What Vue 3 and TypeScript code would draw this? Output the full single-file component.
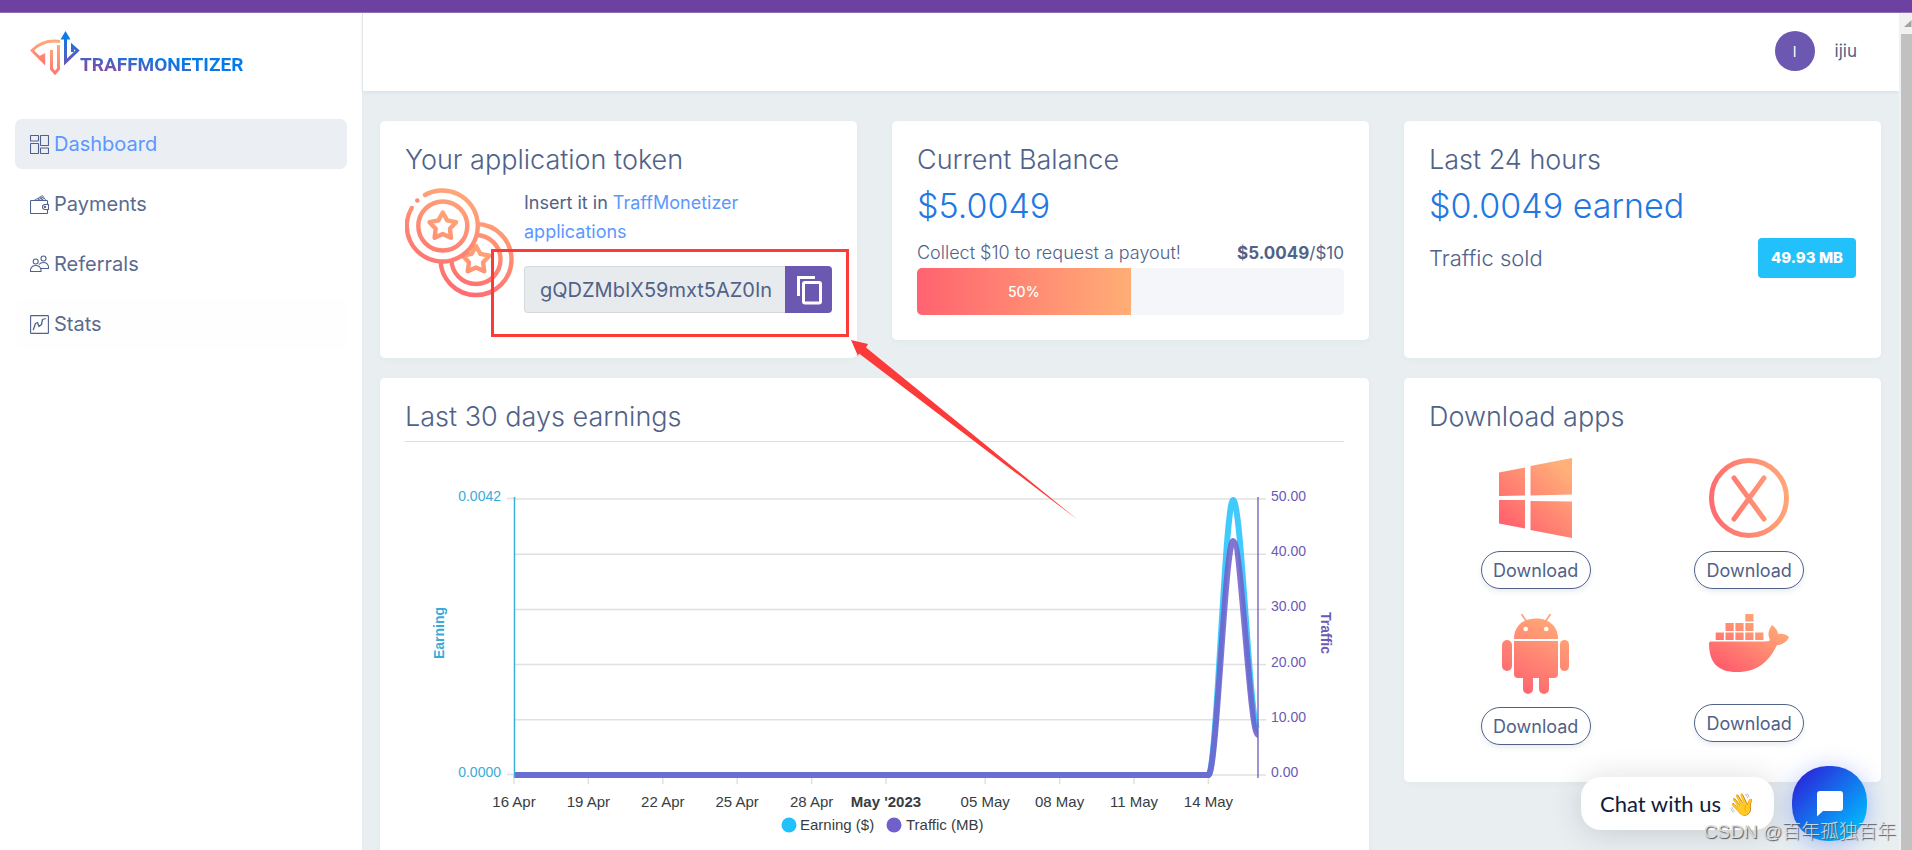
<script setup lang="ts">
import { ref } from 'vue'

interface NavItem {
  id: string
  label: string
}

const nav: NavItem[] = [
  { id: 'dashboard', label: 'Dashboard' },
  { id: 'payments', label: 'Payments' },
  { id: 'referrals', label: 'Referrals' },
  { id: 'stats', label: 'Stats' },
]
const active = ref('dashboard')
const token = ref('gQDZMbIX59mxt5AZ0In')
const progress = 50

const apps: string[] = ['windows', 'macos', 'android', 'docker']

const plot = { left: 109, right: 853, top: 57, bottom: 333 }
const day = (plot.right - plot.left) / 30
const rows = [0, 1, 2, 3, 4, 5].map((i) => ({
  y: plot.top + ((plot.bottom - plot.top) / 5) * i,
  label: ((5 - i) * 10).toFixed(2),
}))
const dates = [
  { d: 0, label: '16 Apr' },
  { d: 3, label: '19 Apr' },
  { d: 6, label: '22 Apr' },
  { d: 9, label: '25 Apr' },
  { d: 12, label: '28 Apr' },
  { d: 15, label: "May '2023", strong: true },
  { d: 19, label: '05 May' },
  { d: 22, label: '08 May' },
  { d: 25, label: '11 May' },
  { d: 28, label: '14 May' },
].map((t) => ({ ...t, x: plot.left + t.d * day }))

function curve(peak: number, end: number): string {
  const x0 = plot.left + 28 * day
  const x1 = x0 + day
  const x2 = plot.right
  const b = plot.bottom
  const k = day / 3
  return `M${plot.left} ${b}H${x0}C${x0 + k} ${b} ${x1 - k} ${peak} ${x1} ${peak}C${x1 + k} ${peak} ${x2 - k} ${end} ${x2} ${end}`
}
const earningPath = curve(58, 288)
const trafficPath = curve(99, 293)

function copyToken() {
  navigator.clipboard?.writeText(token.value)
}
</script>

<template>
  <div class="window">
    <div class="strip"></div>
    <div class="body">
      <aside class="sidebar">
        <a class="logo" href="#">
          <svg width="50" height="46" viewBox="0 0 50 46" fill="none" stroke-width="3">
            <defs>
              <linearGradient id="lg-warm" x1="0" y1="1" x2="0" y2="0">
                <stop offset="0" stop-color="#ff7a72" />
                <stop offset="1" stop-color="#ffa877" />
              </linearGradient>
              <linearGradient id="lg-cool" gradientUnits="userSpaceOnUse" x1="36" y1="34" x2="36" y2="4">
                <stop offset="0" stop-color="#6a55b4" />
                <stop offset="1" stop-color="#0a7bea" />
              </linearGradient>
            </defs>
            <path d="M30 10.500C19 9 9 12.500 2.200 19.500L13.700 31V24.500L9.500 26.500" stroke="url(#lg-warm)" />
            <path d="M21.500 19V38L25 42L28.500 38V14" stroke="url(#lg-warm)" />
            <path d="M35.500 6V31L47.500 19.500L42.500 15V21" stroke="url(#lg-cool)" />
            <path d="M35.500 0L40.500 8.500H30.500Z" fill="#0a7bea" />
          </svg>
          <span>TRAFFMONETIZER</span>
        </a>
        <nav>
          <a
            v-for="n in nav"
            :key="n.id"
            href="#"
            class="item"
            :class="[n.id, { active: n.id === active }]"
            @click.prevent="active = n.id"
          >
            <svg width="19" height="19" viewBox="0 0 19 19" fill="none" stroke="#4f6190" stroke-width="1.100">
              <template v-if="n.id === 'dashboard'">
                <rect x="0.500" y="0.500" width="8" height="5.500" rx="0.500" />
                <rect x="10.500" y="0.500" width="8" height="10" rx="0.500" />
                <rect x="0.500" y="8.500" width="8" height="10" rx="0.500" />
                <rect x="10.500" y="13" width="8" height="5.500" rx="0.500" />
              </template>
              <template v-else-if="n.id === 'payments'">
                <path d="M17.500 9.500V6.200Q17.500 5.500 16.800 5.500H1.200Q0.500 5.500 0.500 6.200V17.800Q0.500 18.500 1.200 18.500H16.800Q17.500 18.500 17.500 17.800V14.500" />
                <path d="M18.500 9.500H15A2.500 2.500 0 0 0 15 14.500H18.500Z" />
                <circle cx="15" cy="12" r="0.600" />
                <path d="M4 5.500L12.500 0.600L16 5.500M7 5.500L13 2M10 5.500L14 3.500M8 3.200L9.500 5.500M10.500 1.800L13 5.500" stroke-width="0.900" />
              </template>
              <template v-else-if="n.id === 'referrals'">
                <circle cx="5.700" cy="6.500" r="2.500" />
                <circle cx="13.500" cy="3.500" r="2.500" />
                <path d="M0.500 16.500V14.500Q1.500 10.500 5.700 10.500Q10 10.500 11 14.500V16.500Z" />
                <path d="M9 9.500Q10.500 7.500 13.500 7.500Q17.500 7.500 18.500 11.500V13.500H11" />
              </template>
              <template v-else>
                <rect x="0.600" y="0.600" width="17.800" height="17.800" rx="0.500" />
                <path d="M3.200 15L5.500 8.500L7.500 7.500L9 11.500L11.500 9.500L12.500 4.500L15.800 3.500" stroke-width="1.300" stroke-linejoin="round" />
              </template>
            </svg>
            <span>{{ n.label }}</span>
          </a>
        </nav>
      </aside>

      <main class="main">
        <header class="header">
          <button class="avatar" type="button" aria-label="Account">I</button>
          <span class="user">ijiu</span>
        </header>

        <div class="content">
          <section class="card token">
            <h2>Your application token</h2>
            <div class="token-row">
              <svg class="medals" width="109" height="110" viewBox="0 0 109 110" fill="none" stroke="url(#coin)" stroke-width="4.400" stroke-linecap="round" stroke-linejoin="round">
                <defs>
                  <linearGradient id="coin" gradientUnits="userSpaceOnUse" x1="35" y1="100" x2="75" y2="10">
                    <stop offset="0" stop-color="#ff6a70" />
                    <stop offset="1" stop-color="#ffa877" />
                  </linearGradient>
                </defs>
                <circle cx="71" cy="71.500" r="35.500" />
                <circle cx="71" cy="71.500" r="24.500" />
                <path transform="translate(71 72)" d="M0-14L4.400-6.100L13.300-4.300L7.100 2.300L8.200 11.300L0 7.500L-8.200 11.300L-7.100 2.300L-13.300-4.300L-4.400-6.100Z" />
                <circle cx="37.800" cy="38" r="36" fill="#fff" stroke="none" />
                <path d="M20 7A35.500 35.500 0 1 1 6.700 20" />
                <circle cx="12.300" cy="12.500" r="2.300" fill="#ff8b74" stroke="none" />
                <circle cx="37.800" cy="38" r="24.500" />
                <path transform="translate(37.800 38.500)" d="M0-14L4.400-6.100L13.300-4.300L7.100 2.300L8.200 11.300L0 7.500L-8.200 11.300L-7.100 2.300L-13.300-4.300L-4.400-6.100Z" />
              </svg>
              <div class="token-col">
                <p>Insert it in <a href="#">TraffMonetizer applications</a></p>
                <div class="group">
                  <input v-model="token" type="text" readonly aria-label="Application token" />
                  <button type="button" aria-label="Copy token" @click="copyToken">
                    <svg width="26" height="30" viewBox="0 0 26 30" fill="none" stroke="#fff" stroke-width="3">
                      <path d="M2.500 21V2.500H19" />
                      <rect x="7.500" y="7.500" width="17" height="20.500" rx="1.500" />
                    </svg>
                  </button>
                  <div class="mark"></div>
                  <svg class="arrow" width="228" height="182" viewBox="0 0 228 182">
                    <path d="M0 0L17 4L15 7.500L227 180L8 13.500L7 16Z" fill="#fc3a3a" />
                  </svg>
                </div>
              </div>
            </div>
          </section>

          <section class="card balance">
            <h2>Current Balance</h2>
            <div class="amount">$5.0049</div>
            <div class="collect">
              <span class="hint">Collect $10 to request a payout!</span>
              <span><b>$5.0049</b>/$10</span>
            </div>
            <div class="bar" role="progressbar" :aria-valuenow="progress">
              <div class="fill" :style="{ width: progress + '%' }">{{ progress }}%</div>
            </div>
          </section>

          <section class="card">
            <h2>Last 24 hours</h2>
            <div class="amount">$0.0049 earned</div>
            <div class="sold">
              <span>Traffic sold</span>
              <span class="badge">49.93 MB</span>
            </div>
          </section>

          <section class="card chart">
            <h2>Last 30 days earnings</h2>
            <svg viewBox="0 0 939 430" class="plot">
              <g stroke="#e0e0e0" stroke-width="1.500">
                <line v-for="r in rows" :key="r.label" :x1="plot.left" :x2="plot.right" :y1="r.y" :y2="r.y" />
                <line v-for="r in rows" :key="'t' + r.label" :x1="plot.right" :x2="plot.right + 8" :y1="r.y" :y2="r.y" />
                <line v-for="t in dates" :key="t.label" :x1="t.x" :x2="t.x" :y1="plot.bottom" :y2="plot.bottom + 9" />
                <path d="M102 56.500H109M102 332.500H109" />
              </g>
              <g fill="none" stroke-width="6">
                <path :d="earningPath" stroke="#22c1fb" stroke-opacity="0.850" />
                <path :d="trafficPath" stroke="#6f60cb" stroke-opacity="0.870" />
              </g>
              <path d="M109.500 55V336" stroke="#3daedb" stroke-width="1.500" />
              <path d="M853 55V336" stroke="#6b5bb5" stroke-width="1.300" />
              <g class="ylab earn" text-anchor="end">
                <text x="96" y="59">0.0042</text>
                <text x="96" y="335">0.0000</text>
              </g>
              <g class="ylab traf">
                <text v-for="r in rows" :key="r.label" x="866" :y="r.y + 2">{{ r.label }}</text>
              </g>
              <text class="axis earn" text-anchor="middle" transform="translate(39 191) rotate(-90)">Earning</text>
              <text class="axis traf" text-anchor="middle" transform="translate(916 191) rotate(90)">Traffic</text>
              <g class="xlab" text-anchor="middle">
                <text v-for="t in dates" :key="t.label" :x="t.x" y="365" :class="{ strong: t.strong }">{{ t.label }}</text>
              </g>
              <g class="xlab">
                <circle cx="384" cy="383" r="7.500" fill="#22c1fb" />
                <text x="395" y="388">Earning ($)</text>
                <circle cx="489" cy="383" r="7.500" fill="#6f60cb" />
                <text x="501" y="388">Traffic (MB)</text>
              </g>
            </svg>
          </section>

          <section class="card downloads">
            <h2>Download apps</h2>
            <div class="apps">
              <div v-for="a in apps" :key="a" class="app">
                <svg v-if="a === 'windows'" width="73" height="80" viewBox="0 0 73 80" fill="url(#app-warm)">
                  <defs>
                    <linearGradient id="app-warm" gradientUnits="userSpaceOnUse" x1="8" y1="66" x2="62" y2="8">
                      <stop offset="0" stop-color="#ff646e" />
                      <stop offset="1" stop-color="#ffaf79" />
                    </linearGradient>
                  </defs>
                  <path d="M0 14.500L26 9.500V37.500L0 38ZM31.500 8L73 0V36.500L31.500 37.500ZM0 42H26V70.500L0 65.500ZM31.500 43L73 43.500V80L31.500 72Z" />
                </svg>
                <svg v-else-if="a === 'macos'" width="80" height="80" viewBox="0 0 80 80" fill="none" stroke="url(#mac-warm)" stroke-width="5" stroke-linecap="round">
                  <defs>
                    <linearGradient id="mac-warm" gradientUnits="userSpaceOnUse" x1="0" y1="44" x2="80" y2="36">
                      <stop offset="0" stop-color="#ff6a70" />
                      <stop offset="1" stop-color="#ffa877" />
                    </linearGradient>
                  </defs>
                  <circle cx="40" cy="40" r="37.500" />
                  <path d="M25 20L55 61M55 20L25 61" />
                </svg>
                <svg v-else-if="a === 'android'" width="67" height="80" viewBox="0 0 67 80" fill="url(#droid-warm)">
                  <defs>
                    <linearGradient id="droid-warm" gradientUnits="userSpaceOnUse" x1="16" y1="72" x2="52" y2="8">
                      <stop offset="0" stop-color="#ff6870" />
                      <stop offset="1" stop-color="#ffa877" />
                    </linearGradient>
                  </defs>
                  <path d="M12 25C12 12 21 4.500 34 4.500S56 12 56 25Z" />
                  <path d="M19.500 0L24.500 7.500M48.500 0L43.500 7.500" stroke="#ffa076" stroke-width="1.600" />
                  <circle cx="23.700" cy="15" r="2.300" fill="#fff" />
                  <circle cx="44.200" cy="15" r="2.300" fill="#fff" />
                  <path d="M12 27H56V60Q56 64 52 64H16Q12 64 12 60Z" />
                  <rect x="0" y="26" width="10" height="31" rx="5" />
                  <rect x="58" y="26" width="9" height="31" rx="4.500" />
                  <rect x="21" y="58" width="10" height="22" rx="5" />
                  <rect x="37" y="58" width="10" height="22" rx="5" />
                </svg>
                <svg v-else width="80" height="77" viewBox="0 0 80 77" fill="url(#whale-warm)">
                  <defs>
                    <linearGradient id="whale-warm" gradientUnits="userSpaceOnUse" x1="18" y1="56" x2="50" y2="4">
                      <stop offset="0" stop-color="#ff5f6d" />
                      <stop offset="1" stop-color="#ffa676" />
                    </linearGradient>
                  </defs>
                  <path d="M36.300 0H44.500V7.500H36.300ZM16.500 9H24.700V17H16.500ZM26.400 9H34.600V17H26.400ZM36.300 9H44.500V17H36.300ZM6.700 18.500H14.900V26H6.700ZM16.500 18.500H24.700V26H16.500ZM26.400 18.500H34.600V26H26.400ZM36.300 18.500H44.500V26H36.300ZM46.200 18.500H54.400V26H46.200Z" />
                  <path d="M0 29Q0 27.500 2 27.500H56C59 27.500 61 26.500 61 26C58 20 60 15 63 11C67 14 69 17 69 20C73 19.500 77 20 80 23C78 28 73 31 68 31C60 48 48 58 28 58C8 58 0 48 0 29Z" />
                </svg>
                <button type="button">Download</button>
              </div>
            </div>
          </section>
        </div>
      </main>

      <div class="scroll">
        <svg width="11" height="21" viewBox="0 0 11 21"><path d="M3 14L10.500 7V14Z" fill="#a3a3a3" /></svg>
        <div class="thumb"></div>
      </div>
    </div>

    <div class="chat">
      <div class="bubble">Chat with us <span class="wave">👋</span></div>
      <button type="button" aria-label="Open chat">
        <svg width="26" height="26" viewBox="0 0 26 26" fill="#fff"><path d="M3 0H23Q26 0 26 3V17Q26 20 23 20H6L0 25.500V3Q0 0 3 0Z" /></svg>
      </button>
    </div>
    <div class="credit">CSDN @百年孤独百年</div>
  </div>
</template>

<style>
body {
  margin: 0;
}
</style>

<style scoped>
* {
  box-sizing: border-box;
}
.window {
  position: relative;
  height: 100vh;
  display: flex;
  flex-direction: column;
  overflow: hidden;
  font-family: Inter, "Open Sans", sans-serif;
  color: #506288;
  background: #e9eff1;
}
.strip {
  flex: none;
  height: 13px;
  background: #6d41a1;
  border-bottom: 1px solid #9170b7;
}
.body {
  flex: 1;
  min-height: 0;
  display: flex;
}
.sidebar {
  flex: none;
  width: 363px;
  padding: 0 15px;
  background: #fff;
  border-right: 1px solid #e7ebee;
}
.logo {
  display: flex;
  align-items: flex-start;
  padding: 18px 15px 0;
  height: 106px;
  text-decoration: none;
}
.logo svg {
  flex: none;
}
.logo span {
  font: bold 19px/28px Roboto, sans-serif;
  margin-top: 20px;
  color: transparent;
  background: linear-gradient(to top right, #7d4fa3 25%, #047bea 60%);
  background-clip: text;
}
.item {
  display: flex;
  align-items: center;
  gap: 5px;
  height: 50px;
  margin-bottom: 10px;
  padding: 0 15px;
  border-radius: 7px;
  font-size: 20px;
  color: #5a6b8f;
  text-decoration: none;
}
.item.active {
  background: #ebeef3;
  color: #5a98ff;
}
.item.stats {
  background: #fefefe;
}
.main {
  flex: 1;
  min-width: 0;
  display: flex;
  flex-direction: column;
}
.header {
  flex: none;
  display: flex;
  align-items: center;
  justify-content: flex-end;
  gap: 20px;
  height: 78px;
  padding: 0 42px 2px 0;
  background: #fff;
  box-shadow: 0 1px 4px rgba(60, 80, 110, 0.1);
}
.avatar {
  width: 40px;
  height: 40px;
  border: 0;
  padding: 0;
  border-radius: 50%;
  background: #6c58b0;
  color: #fff;
  font: 14px Inter, sans-serif;
}
.user {
  font-size: 17px;
}
.content {
  flex: 1;
  min-height: 0;
  overflow-y: auto;
  scrollbar-width: none;
  display: grid;
  grid-template-columns: repeat(3, minmax(0, 1fr));
  grid-auto-rows: max-content;
  align-items: start;
  gap: 20px 35px;
  padding: 30px 18px 30px 17px;
}
.card {
  padding: 25px;
  background: #fff;
  border-radius: 5px;
  box-shadow: 0 2px 6px rgba(60, 80, 110, 0.04);
  align-self: stretch;
}
.card.balance,
.card.downloads {
  align-self: start;
}
h2 {
  margin: 0 0 12px;
  font-size: 27px;
  line-height: 28px;
  font-weight: 300;
}
.amount {
  margin-bottom: 12px;
  font-size: 34px;
  line-height: 40px;
  font-weight: 300;
  color: #2277e3;
}
.token-row {
  display: flex;
  gap: 10px;
  padding: 2px 0 20px;
}
.medals {
  flex: none;
}
.token-col {
  flex: 1;
  min-width: 0;
}
.token-col p {
  margin: 0 0 20px;
  font-size: 18px;
  line-height: 29px;
  max-width: 260px;
}
a {
  color: #5a98ff;
  text-decoration: none;
}
.group {
  position: relative;
  display: flex;
  height: 47px;
}
.group input {
  flex: 1;
  min-width: 0;
  padding: 0 8px 0 15px;
  border: 1px solid #d6d9dc;
  border-right: 0;
  border-radius: 4px 0 0 4px;
  background: #e8ebed;
  color: #506288;
  font: 20px Inter, sans-serif;
  outline: none;
}
.group button {
  flex: none;
  width: 47px;
  padding: 0;
  border: 0;
  border-radius: 0 4px 4px 0;
  background: #6b58b0;
  display: flex;
  align-items: center;
  justify-content: center;
}
.mark {
  position: absolute;
  inset: -17px -17px -24px -33px;
  border: 3px solid #fc3a3a;
  pointer-events: none;
}
.arrow {
  position: absolute;
  left: 327px;
  top: 74px;
  z-index: 2;
  pointer-events: none;
}
.collect {
  display: flex;
  justify-content: space-between;
  font-size: 17px;
  line-height: 30px;
}
.hint {
  font-size: 18px;
  font-weight: 300;
}
.bar {
  height: 47px;
  border-radius: 5px;
  background: #f4f6fa;
  overflow: hidden;
}
.fill {
  height: 100%;
  background: linear-gradient(90deg, #ff6370, #ffae76);
  color: #fff;
  font-size: 14px;
  font-weight: 500;
  line-height: 47px;
  text-align: center;
}
.sold {
  display: flex;
  justify-content: space-between;
  align-items: center;
  font-size: 22px;
  font-weight: 300;
}
.badge {
  padding: 0 13px;
  border-radius: 4px;
  background: #23c1fb;
  color: #fff;
  font-size: 15px;
  line-height: 40px;
  font-weight: 800;
}
.chart {
  grid-column: span 2;
}
.chart h2 {
  padding-bottom: 10px;
  margin: 0;
  border-bottom: 1px solid #dadde6;
}
.plot {
  display: block;
  width: 100%;
  font-family: "Liberation Sans", Arial, sans-serif;
}
.ylab {
  font-size: 14px;
}
.axis {
  font-size: 14px;
  font-weight: bold;
}
.earn {
  fill: #3aabd9;
}
.traf {
  fill: #6b5ab5;
}
.xlab {
  font-size: 15px;
  fill: #373d3f;
}
.strong {
  font-weight: bold;
}
.downloads {
  padding-bottom: 37px;
}
.apps {
  display: grid;
  grid-template-columns: 1fr 1fr;
  row-gap: 25px;
  padding-top: 15px;
  align-items: start;
}
.app {
  display: flex;
  flex-direction: column;
  align-items: center;
  gap: 13px;
}
.app button {
  width: 110px;
  height: 38px;
  padding: 0;
  border: 1px solid #506288;
  border-radius: 19px;
  background: #fff;
  color: #506288;
  font: 18px Inter, sans-serif;
  box-shadow: 0 3px 5px rgba(60, 80, 110, 0.1);
}
.scroll {
  flex: none;
  width: 13px;
  padding-left: 2px;
  background: #f1f1f1;
  display: flex;
  flex-direction: column;
}
.thumb {
  flex: 1;
  background: #c1c1c1;
}
.chat {
  position: absolute;
  right: 45px;
  bottom: 9px;
  display: flex;
  align-items: center;
  gap: 18px;
}
.bubble {
  display: flex;
  align-items: center;
  gap: 7px;
  height: 53px;
  padding: 0 19px;
  border-radius: 20px;
  background: #fff;
  color: #10203a;
  font: 22px Lato, sans-serif;
  box-shadow: 0 3px 32px rgba(0, 18, 46, 0.16);
}
.wave {
  font-size: 22px;
}
.chat button {
  width: 75px;
  height: 75px;
  padding: 0;
  border: 0;
  border-radius: 35px;
  background: linear-gradient(135deg, #2a27da 10%, #00bbff 88%);
  box-shadow: 0 4px 24px rgba(38, 86, 255, 0.35);
  display: flex;
  align-items: center;
  justify-content: center;
}
.credit {
  position: absolute;
  right: 16px;
  bottom: 4px;
  font: 300 19px/28px "Liberation Sans", "Noto Sans CJK SC", sans-serif;
  color: rgba(225, 229, 232, 0.9);
  text-shadow: 1px 1px 1px #555;
}
</style>
